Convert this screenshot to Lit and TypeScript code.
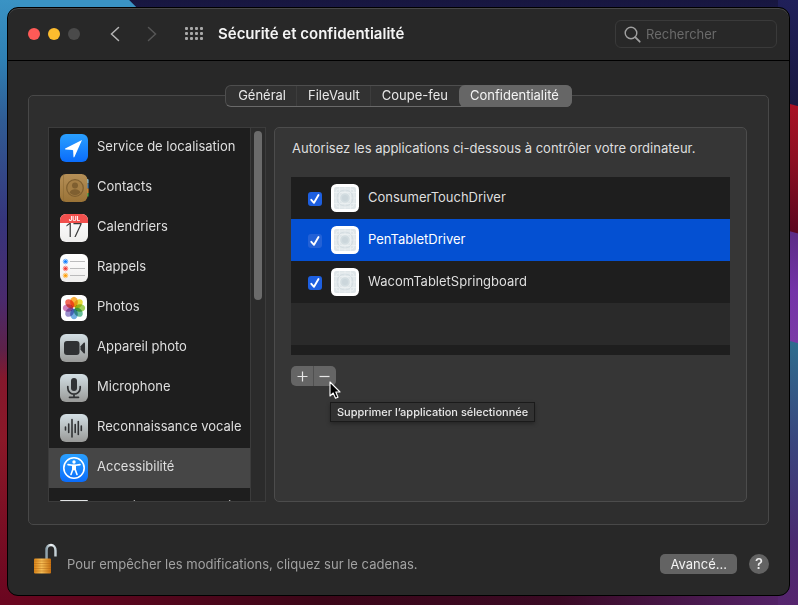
import { LitElement, html, css, svg, nothing, TemplateResult } from "lit";
import { customElement, state } from "lit/decorators.js";
import { classMap } from "lit/directives/class-map.js";

interface Category {
  id: string;
  label: string;
}

interface DriverApp {
  name: string;
  allowed: boolean;
}

const TABS = ["Général", "FileVault", "Coupe-feu", "Confidentialité"];

const CATEGORIES: Category[] = [
  { id: "location", label: "Service de localisation" },
  { id: "contacts", label: "Contacts" },
  { id: "calendar", label: "Calendriers" },
  { id: "reminders", label: "Rappels" },
  { id: "photos", label: "Photos" },
  { id: "camera", label: "Appareil photo" },
  { id: "microphone", label: "Microphone" },
  { id: "speech", label: "Reconnaissance vocale" },
  { id: "accessibility", label: "Accessibilité" },
  { id: "keyboard", label: "Surveillance de l’entrée" },
];

const PETALS = ["#f9a11b", "#e4d51c", "#8fc73e", "#4fb38a", "#5aa0dc", "#8a7cc4", "#c76bb0", "#f0503c"];

const plate = (fill: string) => svg`<rect width="28" height="28" rx="6" fill=${fill} />`;

const GLYPHS: Record<string, TemplateResult> = {
  location: svg`${plate("url(#blue)")}
    <path d="M22 6 5.200 14.600q-.6.700.3.800l6.900.5q.6.100.7.700l.4 6.400q.3.900.9.100Z" fill="#fff" />`,
  contacts: svg`
    <path d="M24 5h3.500q1 0 1 1v3.500H24Z" fill="#7ec8f2" />
    <path d="M24 10h4.500v4.500H24Z" fill="#2d7fd2" />
    <path d="M24 14.500h4.500v4.500H24Z" fill="#ef8b22" />
    <path d="M24 19h4.500v3.500H24Z" fill="#35b24a" />
    <rect width="27.500" height="28" rx="6" fill="url(#leather)" />
    <path d="M3.500.5v27" stroke="#8a6a35" stroke-width=".8" opacity=".7" />
    <circle cx="15" cy="14" r="8.300" fill="#a47e45" stroke="#7f5f30" stroke-width="1.200" />
    <circle cx="15" cy="11.500" r="3" fill="#7f5f30" />
    <path d="M9.500 18.800q1-3.600 5.500-3.600t5.500 3.600a7.500 7.500 0 0 1-11 0Z" fill="#7f5f30" />`,
  calendar: svg`${plate("url(#paper)")}
    <path d="M0 9V6a6 6 0 0 1 6-6h16a6 6 0 0 1 6 6v3Z" fill="#f2504d" />
    <text class="month" x="14.500" y="7">JUL</text>
    <text class="day" x="14" y="23">17</text>`,
  reminders: svg`${plate("url(#paper)")}
    <g fill="none" stroke-width="1">
      <circle cx="5.500" cy="7.500" r="2.300" stroke="#79b6ff" /><circle cx="5.500" cy="14.500" r="2.300" stroke="#ff8f8a" /><circle cx="5.500" cy="21.500" r="2.300" stroke="#ffca77" />
    </g>
    <circle cx="5.500" cy="7.500" r="1.600" fill="#1480ff" /><circle cx="5.500" cy="14.500" r="1.600" fill="#f23c36" /><circle cx="5.500" cy="21.500" r="1.600" fill="#ff9f0a" />
    <path d="M10 7.500h15M10 14.500h15M10 21.500h15" stroke="#b4b4b6" stroke-width=".9" />`,
  photos: svg`<rect x="1" y="1" width="26" height="26" rx="5.500" fill="#fff" />
    ${PETALS.map(
      (color, i) =>
        svg`<ellipse class="petal" cx="14" cy="8" rx="3.800" ry="5.200" fill=${color} transform="rotate(${i * 45} 14 14)" />`
    )}`,
  camera: svg`${plate("url(#steel)")}
    <rect x="4" y="7" width="15.500" height="14" rx="3" fill="#2f3133" />
    <path d="M20.500 12.300 23.700 8.800q1.300-1 1.300.6v9.200q0 1.600-1.300.6L20.500 15.700Z" fill="#2f3133" />`,
  microphone: svg`${plate("url(#steel)")}
    <rect x="11" y="4" width="6" height="13" rx="3" fill="#303234" />
    <path d="M7.800 12.500v1.500a6.200 6.200 0 0 0 12.400 0v-1.500M14 20.200v3M9.500 23.300h9" fill="none" stroke="#303234" stroke-width="1.700" stroke-linecap="round" />`,
  speech: svg`${plate("url(#steel)")}
    <path d="M5.500 13v3M8.700 10v8.500M12 5.500v17.500M15.200 10.500v8M18.300 7.500v13M21.300 12v4.500" fill="none" stroke="#303234" stroke-width="1.600" stroke-linecap="round" />`,
  accessibility: svg`${plate("url(#blue)")}
    <circle cx="14" cy="14" r="10.200" fill="none" stroke="#fff" stroke-width="1.600" />
    <circle cx="14" cy="8" r="1.700" fill="#fff" />
    <path d="M8 10.600 12.500 11.300h3L20 10.600M12.800 15.500 11 20.500M15.200 15.500 17 20.500" fill="none" stroke="#fff" stroke-width="1.600" stroke-linecap="round" />
    <path d="M12 10.700h4v6.300l-2-1-2 1Z" fill="#fff" />`,
  keyboard: svg`<rect y="6" width="28" height="17" rx="1" fill="#e2e4e5" />`,
};

const categoryIcon = (id: string) => html`
  <svg class="icon" viewBox="0 0 28 28" aria-hidden="true">
    <defs>
      <linearGradient id="blue" x2="0" y2="1"><stop stop-color="#2aa0ff" /><stop offset="1" stop-color="#0a6cfb" /></linearGradient>
      <linearGradient id="leather" x2="0" y2="1"><stop stop-color="#b58f57" /><stop offset="1" stop-color="#9a7337" /></linearGradient>
      <linearGradient id="paper" x2="0" y2="1"><stop stop-color="#fff" /><stop offset="1" stop-color="#efeeed" /></linearGradient>
      <linearGradient id="steel" x2="0" y2="1"><stop stop-color="#d3dfe4" /><stop offset="1" stop-color="#999a98" /></linearGradient>
    </defs>
    ${GLYPHS[id]}
  </svg>
`;

const driverIcon = html`
  <svg class="icon" viewBox="0 0 28 28" aria-hidden="true">
    <rect width="28" height="28" rx="5.500" fill="#fff" />
    <rect x="3" y="3" width="22" height="22" rx="2" fill="#dfe6e9" />
    <g fill="none" stroke="#f1f5f6" stroke-width=".6">
      <rect x="5" y="5" width="18" height="18" rx="3" />
      <path d="M8.500 3v22M19.500 3v22M3 8.500h22M3 19.500h22M14 3v6M14 19v6M3 14h6M19 14h6" />
    </g>
    <circle cx="14" cy="14" r="8" fill="none" stroke="#cfd9dd" stroke-width=".6" />
    <circle cx="14" cy="14" r="5.200" fill="#d3dde1" stroke="#eef2f4" stroke-width=".6" />
    <circle cx="14" cy="14" r="3" fill="#cbd6db" />
  </svg>
`;

@customElement("app-root")
export class AppRoot extends LitElement {
  @state() private tab = "Confidentialité";
  @state() private category = "accessibility";
  @state() private selected = "PenTabletDriver";
  @state() private apps: DriverApp[] = [
    { name: "ConsumerTouchDriver", allowed: true },
    { name: "PenTabletDriver", allowed: true },
    { name: "WacomTabletSpringboard", allowed: true },
  ];

  static styles = css`
    :host {
      display: block;
      box-sizing: border-box;
      height: 100vh;
      padding: 7px 8px 9px 7px;
      font: 13px/16px Inter, "Liberation Sans", sans-serif;
      color: #dfdfdf;
      background:
        linear-gradient(195deg, #20205a, #1a1840 102px, #a81024 103px, #8c0f22 156px, #5c0620 225px, #5c2b86 226px, #7433a8 282px, #7a3aa6 331px, #2f6c8e 332px, #39467e 427px, #4a2a70 524px, #57256e) right / 20px 100% no-repeat,
        linear-gradient(#3a93c4, #2f80b4 60px, #305c94 120px, #36357c 220px, #4a2a6c 300px, #5d2148 350px, #84182c 378px, #8a1828 440px, #6b0620 600px) left / 20px 100% no-repeat,
        linear-gradient(45deg, #3a93c4 calc(100% - 6px), transparent calc(100% - 5px)) 0 0 / 137px 7px no-repeat,
        linear-gradient(#17163f, #1b1a4a) 0 0 / 100% 20px no-repeat,
        linear-gradient(90deg, #6b0620, #3c0618 40%, #3a0a24 70%, #55246c) #222;
    }
    * {
      box-sizing: border-box;
    }
    button,
    input {
      font: inherit;
      color: inherit;
      margin: 0;
      padding: 0;
      border: 0;
      background: none;
    }
    ul {
      list-style: none;
      margin: 0;
      padding: 0;
    }
    svg {
      display: block;
      flex: none;
    }
    .window {
      display: flex;
      flex-direction: column;
      height: 100%;
      border: 1px solid #000;
      border-radius: 11px;
      background: #282828;
      box-shadow: inset 0 1px #484848;
      overflow: hidden;
    }

    .titlebar {
      display: flex;
      align-items: center;
      flex: none;
      height: 53px;
      padding: 0 12px 0 20px;
      border-bottom: 1px solid #000;
    }
    .lights {
      display: flex;
      gap: 8px;
    }
    .light {
      width: 12px;
      height: 12px;
      border-radius: 50%;
      background: #4a4a4a;
    }
    .close {
      background: #ff5a57;
    }
    .minimize {
      background: #fdbc2e;
    }
    .nav {
      display: flex;
      gap: 27px;
      margin-left: 30px;
      color: #b4b4b4;
    }
    .nav :disabled {
      color: #565656;
    }
    .grid {
      margin-left: 28px;
      color: #a9a9a9;
    }
    h1 {
      flex: 1;
      margin: 0 0 0 15px;
      font-size: 15px;
      line-height: 20px;
      font-weight: 600;
      color: #f4f4f4;
    }
    .search {
      display: flex;
      align-items: center;
      gap: 5px;
      width: 162px;
      height: 28px;
      padding: 0 8px;
      border: 1px solid #3a3a3a;
      border-radius: 6px;
      color: #a0a0a0;
    }
    .search input {
      flex: 1;
      min-width: 0;
      outline: none;
    }
    .search input::placeholder {
      color: #6a6a6a;
      opacity: 1;
    }

    .body {
      display: flex;
      flex-direction: column;
      align-items: center;
      flex: 1;
      min-height: 0;
      padding: 24px 20px 0;
    }
    .tabs {
      display: flex;
      position: relative;
      height: 22px;
      padding: 0 1px;
      border: 1px solid #4e4e4e;
      border-bottom-color: #6a6a6a;
      border-radius: 6px;
      background: #323232;
    }
    .tab {
      padding: 0 11px 2px;
      line-height: 18px;
      color: #e8e8e8;
    }
    .tab + .tab:not(.current) {
      box-shadow: -1px 0 #3d3d3d;
    }
    .tab.current {
      margin: -1px -2px -1px 0;
      padding: 0 13px 2px 11px;
      border-radius: 6px;
      background: #666;
      color: #f4f4f4;
    }
    .panel {
      display: flex;
      gap: 8px;
      align-self: stretch;
      flex: 1;
      min-height: 0;
      margin-top: -12px;
      padding: 31px 21px 22px 19px;
      border: 1px solid #484848;
      border-radius: 5px;
      background: #2e2e2e;
    }

    .sidebar {
      display: flex;
      flex: none;
      width: 218px;
      border: 1px solid #3c3c3c;
    }
    .categories {
      flex: 1;
      overflow: hidden;
      background: #1e1e1e;
    }
    .category {
      display: flex;
      align-items: center;
      gap: 9px;
      width: 100%;
      height: 40px;
      padding: 0 11px;
      text-align: left;
      white-space: nowrap;
    }
    .category.current {
      background: #464646;
    }
    .category span {
      padding-bottom: 5px;
    }
    .icon {
      width: 28px;
      height: 28px;
      overflow: visible;
    }
    .month {
      font: 700 6px Inter, sans-serif;
      text-anchor: middle;
      fill: #fff;
    }
    .day {
      font: 300 18px Inter, sans-serif;
      text-anchor: middle;
      fill: #3a3a3a;
    }
    .petal {
      opacity: 0.85;
      mix-blend-mode: multiply;
    }
    .scrollbar {
      width: 15px;
      padding: 3px;
      border-left: 1px solid #3c3c3c;
      background: #2b2b2b;
    }
    .thumb {
      width: 8px;
      height: 46%;
      border-radius: 4px;
      background: #6b6b6b;
    }

    .content {
      flex: 1;
      padding: 12px 16px;
      border: 1px solid #4c4c4c;
      border-radius: 5px;
      background: #363636;
    }
    .content p {
      margin: 0 1px 21px;
      white-space: nowrap;
    }
    .apps {
      height: 178px;
      background: repeating-linear-gradient(#1e1e1e 0 42px, #2a2a2a 42px 84px, #1e1e1e 84px 126px, #2a2a2a 126px 168px);
    }
    .app {
      display: flex;
      align-items: center;
      height: 42px;
      padding-left: 17px;
    }
    .app label {
      display: flex;
      align-items: center;
      gap: 9px;
    }
    .app.current {
      background: #0450d2;
      color: #fff;
    }
    .app label span {
      padding-bottom: 2px;
    }
    .check {
      display: grid;
      place-items: center;
      width: 14px;
      height: 14px;
      margin: 2px 9px 0 0;
      border-radius: 3px;
      background: #1d5fe0;
    }
    .check input {
      grid-area: 1 / 1;
      width: 14px;
      height: 14px;
      appearance: none;
    }
    .check svg {
      grid-area: 1 / 1;
      pointer-events: none;
    }
    .app.current .check {
      background: #2361d6;
    }
    .actions {
      display: flex;
      position: relative;
      width: 45px;
      height: 20px;
      margin-top: 11px;
      border-radius: 5px;
      background: #656565;
    }
    .actions button {
      display: grid;
      place-items: center;
      flex: 1;
    }
    .actions button + button {
      box-shadow: -1px 0 #505050;
    }
    .pointer {
      position: absolute;
      left: 38px;
      top: 15px;
    }
    .tooltip {
      position: absolute;
      left: 39px;
      top: 36px;
      padding: 0 6px;
      border: 1px solid #1a1a1a;
      background: #323232;
      box-shadow: 0 2px 4px rgb(0 0 0 / 30%);
      font-size: 11px;
      line-height: 18px;
      font-weight: 500;
      color: #e8e8e8;
      white-space: nowrap;
    }

    footer {
      display: flex;
      align-items: center;
      align-self: stretch;
      flex: none;
      height: 70px;
      padding: 0 0 0 5px;
      color: #a2a2a2;
    }
    .lock {
      display: flex;
      align-items: center;
      gap: 9px;
      margin-right: auto;
      padding-bottom: 2px;
    }
    .lock span {
      padding-top: 10px;
    }
    .advanced {
      height: 20px;
      margin-top: 8px;
      padding: 0 10px 1px;
      border-radius: 5px;
      background: #636363;
      color: #f2f2f2;
    }
    .help {
      width: 20px;
      height: 20px;
      margin: 7px 0 0 12px;
      border-radius: 50%;
      background: #636363;
      font-size: 15px;
      line-height: 20px;
      font-weight: 500;
      color: #eee;
    }
  `;

  private toggle(name: string) {
    this.apps = this.apps.map((a) => (a.name === name ? { ...a, allowed: !a.allowed } : a));
  }

  private removeSelected() {
    this.apps = this.apps.filter((a) => a.name !== this.selected);
  }

  private renderTitlebar() {
    return html`
      <header class="titlebar">
        <div class="lights">
          <button class="light close" aria-label="Fermer"></button>
          <button class="light minimize" aria-label="Réduire"></button>
          <button class="light" aria-label="Agrandir" disabled></button>
        </div>
        <nav class="nav">
          <button aria-label="Précédent">
            <svg width="10" height="16" viewBox="0 0 10 16" fill="none" stroke="currentColor" stroke-width="1.500"><path d="M8.500 1.500 1.500 8l7 6.500" stroke-linecap="round" /></svg>
          </button>
          <button aria-label="Suivant" disabled>
            <svg width="10" height="16" viewBox="0 0 10 16" fill="none" stroke="currentColor" stroke-width="1.500"><path d="m1.500 1.500 7 6.500-7 6.500" stroke-linecap="round" /></svg>
          </button>
        </nav>
        <button class="grid" aria-label="Tout afficher">
          <svg width="18" height="14" viewBox="0 0 18 14" fill="currentColor">
            ${[0, 5, 10].map((y) => [0, 5, 10, 15].map((x) => svg`<rect x=${x} y=${y} width="3" height="3" rx="1" />`))}
          </svg>
        </button>
        <h1>Sécurité et confidentialité</h1>
        <label class="search">
          <svg width="17" height="17" viewBox="0 0 17 17" fill="none" stroke="currentColor" stroke-width="1.400"><circle cx="7" cy="7" r="5.800" /><path d="m11.200 11.200 4.500 4.500" stroke-width="1.800" stroke-linecap="round" /></svg>
          <input type="text" placeholder="Rechercher" aria-label="Rechercher" />
        </label>
      </header>
    `;
  }

  private renderSidebar() {
    return html`
      <div class="sidebar">
        <ul class="categories">
          ${CATEGORIES.map(
            ({ id, label }) => html`
              <li>
                <button class=${classMap({ category: true, current: id === this.category })} @click=${() => (this.category = id)}>
                  ${categoryIcon(id)}<span>${label}</span>
                </button>
              </li>
            `
          )}
        </ul>
        <div class="scrollbar"><div class="thumb"></div></div>
      </div>
    `;
  }

  private renderContent() {
    return html`
      <section class="content">
        <p>Autorisez les applications ci-dessous à contrôler votre ordinateur.</p>
        <ul class="apps">
          ${this.apps.map(
            ({ name, allowed }) => html`
              <li class=${classMap({ app: true, current: name === this.selected })} @click=${() => (this.selected = name)}>
                <span class="check">
                  <input id=${name} type="checkbox" .checked=${allowed} @change=${() => this.toggle(name)} />
                  ${allowed
                    ? html`<svg width="14" height="14" viewBox="0 0 14 14" fill="none" stroke="#fff" stroke-width="1.900" stroke-linecap="round" stroke-linejoin="round"><path d="m3.300 7.800 2.700 3L10.500 3" /></svg>`
                    : nothing}
                </span>
                <label for=${name}>${driverIcon}<span>${name}</span></label>
              </li>
            `
          )}
        </ul>
        <div class="actions">
          <button aria-label="Ajouter une application">
            <svg width="11" height="11" viewBox="0 0 11 11" stroke="#e6e6e6" stroke-width="1.200"><path d="M5.500.5v10M.5 5.500h10" /></svg>
          </button>
          <button aria-describedby="tip" aria-label="Supprimer" @click=${this.removeSelected}>
            <svg width="11" height="11" viewBox="0 0 11 11" stroke="#e6e6e6" stroke-width="1.200"><path d="M.5 5.500h10" /></svg>
          </button>
          <svg class="pointer" width="12" height="19" viewBox="0 0 12 19" aria-hidden="true">
            <path d="M1 1v14l3.200-3 2.300 5.300 2.500-1.100L6.800 11H11Z" fill="#000" stroke="#fff" stroke-width="1.100" stroke-linejoin="round" />
          </svg>
          <div class="tooltip" id="tip" role="tooltip">Supprimer l’application sélectionnée</div>
        </div>
      </section>
    `;
  }

  private renderFooter() {
    return html`
      <footer>
        <button class="lock">
          <svg width="25" height="32" viewBox="0 0 25 32" aria-hidden="true">
            <defs>
              <linearGradient id="brass"><stop stop-color="#d98418" /><stop offset=".45" stop-color="#f6bd55" /><stop offset="1" stop-color="#c8700f" /></linearGradient>
              <linearGradient id="chrome"><stop stop-color="#8fa3ad" /><stop offset=".5" stop-color="#f4f8fa" /><stop offset="1" stop-color="#c4d0d6" /></linearGradient>
            </defs>
            <path d="M13.500 16V7.500C13.500 3.500 15.500 2 18 2s4.500 2 4.500 5.500v6" fill="none" stroke="url(#chrome)" stroke-width="2.400" />
            <rect x="1" y="15.500" width="17" height="15" rx="1" fill="url(#brass)" />
            <path d="M1 18h17M1 20.500h17M1 23h17M1 25.500h17M1 28h17" stroke="#a85f12" stroke-width=".7" opacity=".6" />
          </svg>
          <span>Pour empêcher les modifications, cliquez sur le cadenas.</span>
        </button>
        <button class="advanced">Avancé...</button>
        <button class="help" aria-label="Aide">?</button>
      </footer>
    `;
  }

  render() {
    return html`
      <div class="window">
        ${this.renderTitlebar()}
        <div class="body">
          <div class="tabs" role="tablist">
            ${TABS.map(
              (name) => html`
                <button
                  role="tab"
                  aria-selected=${name === this.tab}
                  class=${classMap({ tab: true, current: name === this.tab })}
                  @click=${() => (this.tab = name)}
                >${name}</button>
              `
            )}
          </div>
          <main class="panel">${this.renderSidebar()}${this.renderContent()}</main>
          ${this.renderFooter()}
        </div>
      </div>
    `;
  }
}
